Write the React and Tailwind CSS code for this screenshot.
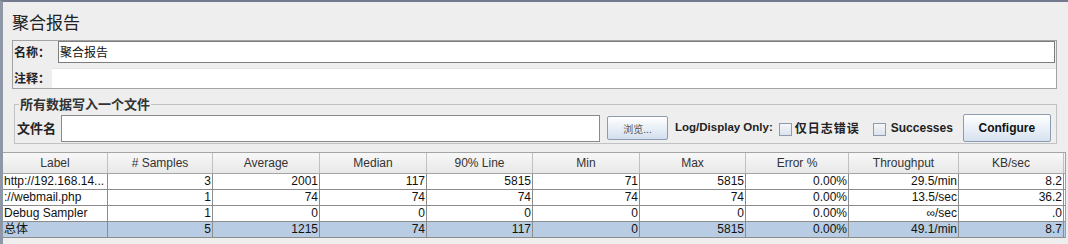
import React from 'react';

const cjk = "font-['Noto_Sans_CJK_SC',sans-serif]";
const latin = "font-['Liberation_Sans','Noto_Sans_CJK_SC',sans-serif]";

const columns = [
  { label: 'Label', w: 'w-[105px]', align: 'text-left' },
  { label: '# Samples', w: 'w-[105px]', align: 'text-right' },
  { label: 'Average', w: 'w-[107px]', align: 'text-right' },
  { label: 'Median', w: 'w-[107px]', align: 'text-right' },
  { label: '90% Line', w: 'w-[106px]', align: 'text-right' },
  { label: 'Min', w: 'w-[107px]', align: 'text-right' },
  { label: 'Max', w: 'w-[106px]', align: 'text-right' },
  { label: 'Error %', w: 'w-[103px]', align: 'text-right' },
  { label: 'Throughput', w: 'w-[110px]', align: 'text-right' },
  { label: 'KB/sec', w: 'w-[105px]', align: 'text-right' },
];

const rows = [
  ['http://192.168.14...', '3', '2001', '117', '5815', '71', '5815', '0.00%', '29.5/min', '8.2'],
  ['://webmail.php', '1', '74', '74', '74', '74', '74', '0.00%', '13.5/sec', '36.2'],
  ['Debug Sampler', '1', '0', '0', '0', '0', '0', '0.00%', '∞/sec', '.0'],
  ['总体', '5', '1215', '74', '117', '0', '5815', '0.00%', '49.1/min', '8.7'],
];

const Checkbox = ({ className = '' }) => (
  <span className={`block w-[13px] h-[13px] mt-[2px] border border-[#8f9cb0] bg-gradient-to-b from-[#f4f6f9] to-[#dce3ec] shrink-0 ${className}`} />
);

export default function App() {
  return (
    <div className={`w-[1068px] h-[244px] bg-[#eeeeee] border-t-2 border-t-[#737a8d] border-l-[3px] border-l-[#8e97a6] overflow-hidden flex flex-col ${latin}`}>
      {/* title */}
      <div className={`h-[38px] pl-[9px] pt-[8px] text-[17px] leading-[24px] text-[#222] ${cjk}`}>聚合报告</div>

      {/* name / comment */}
      <div className="ml-[9px] w-[1045px] h-[49px] border border-[#a3a3a3] flex flex-col">
        <div className="h-[22px] flex items-center">
          <span className={`w-[45px] pl-[1px] text-[12px] font-bold text-[#222] ${cjk}`}>名称：</span>
          <div className={`w-[997px] h-[22px] bg-white border border-[#7d7d7d] pl-[1px] text-[12px] leading-[20px] text-[#111] ${cjk}`}>聚合报告</div>
        </div>
        <div className="h-[20px] mt-[5px] flex items-center">
          <span className={`w-[39px] pl-[1px] text-[12px] font-bold text-[#222] ${cjk}`}>注释：</span>
          <div className="flex-1 h-[20px] bg-white border-t border-[#e4e4e4]" />
        </div>
      </div>

      {/* write to file group */}
      <div className="relative ml-[11px] mt-[15px] w-[1043px] h-[40px] border border-[#c2c2c2] pt-[9px] pb-[1px]">
        <span className={`absolute left-[4px] top-[-9px] px-[1px] bg-[#eeeeee] text-[13px] leading-[16px] font-bold text-[#333] ${cjk}`}>所有数据写入一个文件</span>
        <div className="h-[28px] flex items-center pl-[2px]">
          <span className={`w-[44px] text-[13px] font-bold text-[#222] ${cjk}`}>文件名</span>
          <div className="w-[539px] h-[27px] bg-white border border-[#8a8a8a]" />
          <button className={`ml-[7px] w-[61px] h-[24px] rounded-[2px] border border-[#8d9bb0] bg-gradient-to-b from-[#ffffff] to-[#d3dfee] text-[10px] text-[#555] ${cjk}`}>浏览...</button>
          <span className="ml-[7px] text-[11.5px] font-bold text-[#222]">Log/Display Only:</span>
          <Checkbox className="ml-[6px]" />
          <span className={`ml-[3px] text-[12px] tracking-[1px] font-bold text-[#222] ${cjk}`}>仅日志错误</span>
          <Checkbox className="ml-[13px]" />
          <span className="ml-[5px] text-[12px] font-bold text-[#222]">Successes</span>
          <button className="ml-[10px] w-[88px] h-[28px] rounded-[2px] border border-[#8d9bb0] bg-gradient-to-b from-[#ffffff] to-[#d6e2f0] text-[12px] font-bold text-[#111]">Configure</button>
        </div>
      </div>

      {/* table */}
      <div className="mt-[8px] w-[1063px] border-r border-[#a0a0a0] text-[12px]">
        <div className="flex h-[22px] border-t border-b border-[#a5a5a5] bg-gradient-to-b from-[#f8f8f8] to-[#e8e8e8]">
          {columns.map((c) => (
            <div key={c.label} className={`${c.w} border-r border-[#c0c0c0] flex items-center justify-center text-[#333] leading-[20px]`}>
              {c.label}
            </div>
          ))}
        </div>
        {rows.map((r, i) => (
          <div key={i} className={`flex h-[16px] border-b border-[#8c8c8c] ${i === 3 ? 'bg-[#b8cde3]' : 'bg-white'}`}>
            {r.map((v, j) => (
              <div key={j} className={`${columns[j].w} ${columns[j].align} border-r border-[#8c8c8c] px-[1px] leading-[15px] text-[#111] whitespace-nowrap overflow-hidden`}>
                {v}
              </div>
            ))}
          </div>
        ))}
      </div>
    </div>
  );
}
